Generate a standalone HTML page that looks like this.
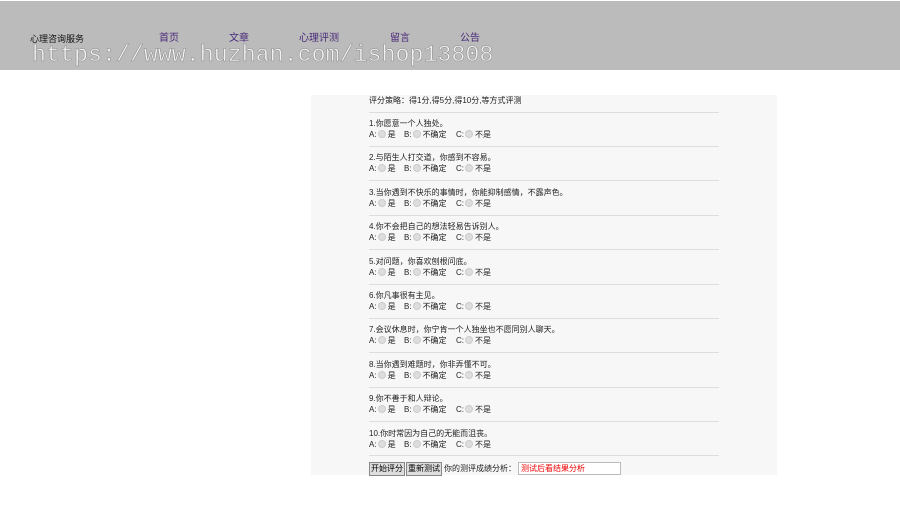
<!DOCTYPE html>
<html><head><meta charset="utf-8"><style>
body{margin:0;width:900px;height:520px;background:#fff;position:relative;overflow:hidden;font-family:"Liberation Sans","Noto Sans CJK SC",sans-serif;}
.hdr{position:absolute;left:0;top:1px;width:900px;height:69px;background:#bbbbbb;}
.t{position:absolute;font-size:10px;white-space:nowrap;}
.wm{position:absolute;left:32px;top:42px;font-family:"Liberation Mono",monospace;font-size:23.3px;color:#f2f2f2;-webkit-text-stroke:0.5px #888;}
.panel{position:absolute;left:311px;top:95px;width:466px;height:380px;background:#f7f7f7;}
.q{position:absolute;left:58px;font-size:8px;line-height:11px;color:#222;white-space:nowrap;}
.hr{position:absolute;left:58px;width:350px;height:1px;background:#ddd;}
.r{display:inline-block;width:6px;height:6px;border-radius:50%;background:#ddd;border:1px solid #ccc;vertical-align:-1px;margin:0 2px 0 1px;}
.a{display:inline-block;width:35px}.b{display:inline-block;width:52px}
.btn{position:absolute;top:367px;height:12px;font-size:8px;line-height:12px;background:#ddd;border:1px solid #888;padding:0 1px;}
</style></head><body>
<div class="hdr"></div>
<div class="t" style="left:30px;top:32px;color:#111;font-size:9px">心理咨询服务</div>
<div class="t" style="left:159px;top:29px;color:#4a2a7a">首页</div>
<div class="t" style="left:229px;top:29px;color:#4a2a7a">文章</div>
<div class="t" style="left:299px;top:29px;color:#4a2a7a">心理评测</div>
<div class="t" style="left:390px;top:29px;color:#4a2a7a">留言</div>
<div class="t" style="left:460px;top:29px;color:#4a2a7a">公告</div>
<div class="wm">https://www.huzhan.com/ishop13808</div>
<div class="panel">
<div class="q" style="top:0">评分策略：得1分,得5分,得10分,等方式评测</div>
<div class="hr" style="top:17px"></div>
<div class="q" style="top:23px">1.你愿意一个人独处。<br><span class="a">A:<span class="r"></span>是</span><span class="b">B:<span class="r"></span>不确定</span>C:<span class="r"></span>不是</div>
<div class="hr" style="top:51px"></div>
<div class="q" style="top:57px">2.与陌生人打交道，你感到不容易。<br><span class="a">A:<span class="r"></span>是</span><span class="b">B:<span class="r"></span>不确定</span>C:<span class="r"></span>不是</div>
<div class="hr" style="top:85px"></div>
<div class="q" style="top:92px">3.当你遇到不快乐的事情时，你能抑制感情，不露声色。<br><span class="a">A:<span class="r"></span>是</span><span class="b">B:<span class="r"></span>不确定</span>C:<span class="r"></span>不是</div>
<div class="hr" style="top:120px"></div>
<div class="q" style="top:126px">4.你不会把自己的想法轻易告诉别人。<br><span class="a">A:<span class="r"></span>是</span><span class="b">B:<span class="r"></span>不确定</span>C:<span class="r"></span>不是</div>
<div class="hr" style="top:154px"></div>
<div class="q" style="top:161px">5.对问题，你喜欢刨根问底。<br><span class="a">A:<span class="r"></span>是</span><span class="b">B:<span class="r"></span>不确定</span>C:<span class="r"></span>不是</div>
<div class="hr" style="top:189px"></div>
<div class="q" style="top:195px">6.你凡事很有主见。<br><span class="a">A:<span class="r"></span>是</span><span class="b">B:<span class="r"></span>不确定</span>C:<span class="r"></span>不是</div>
<div class="hr" style="top:223px"></div>
<div class="q" style="top:229px">7.会议休息时，你宁肯一个人独坐也不愿同别人聊天。<br><span class="a">A:<span class="r"></span>是</span><span class="b">B:<span class="r"></span>不确定</span>C:<span class="r"></span>不是</div>
<div class="hr" style="top:257px"></div>
<div class="q" style="top:264px">8.当你遇到难题时，你非弄懂不可。<br><span class="a">A:<span class="r"></span>是</span><span class="b">B:<span class="r"></span>不确定</span>C:<span class="r"></span>不是</div>
<div class="hr" style="top:292px"></div>
<div class="q" style="top:298px">9.你不善于和人辩论。<br><span class="a">A:<span class="r"></span>是</span><span class="b">B:<span class="r"></span>不确定</span>C:<span class="r"></span>不是</div>
<div class="hr" style="top:326px"></div>
<div class="q" style="top:333px">10.你时常因为自己的无能而沮丧。<br><span class="a">A:<span class="r"></span>是</span><span class="b">B:<span class="r"></span>不确定</span>C:<span class="r"></span>不是</div>
<div class="hr" style="top:360px"></div>
<div class="btn" style="left:58px">开始评分</div>
<div class="btn" style="left:95px">重新测试</div>
<div class="q" style="left:133px;top:368px">你的测评成绩分析：</div>
<div style="position:absolute;left:207px;top:367px;width:99px;height:11px;background:#fff;border:1px solid #bbb;font-size:8px;line-height:11px;color:#e00;padding-left:2px">测试后看结果分析</div>
</div>
</body></html>
